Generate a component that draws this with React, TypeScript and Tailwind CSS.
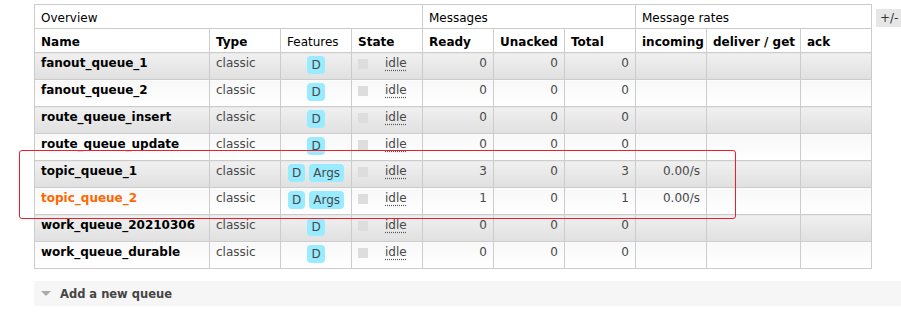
import React from "react";

type Queue = {
  name: string;
  args?: boolean;
  ready: number;
  unacked: number;
  total: number;
  incoming?: string;
  hot?: boolean;
};

const queues: Queue[] = [
  { name: "fanout_queue_1", ready: 0, unacked: 0, total: 0 },
  { name: "fanout_queue_2", ready: 0, unacked: 0, total: 0 },
  { name: "route_queue_insert", ready: 0, unacked: 0, total: 0 },
  { name: "route_queue_update", ready: 0, unacked: 0, total: 0 },
  { name: "topic_queue_1", args: true, ready: 3, unacked: 0, total: 3, incoming: "0.00/s" },
  { name: "topic_queue_2", args: true, ready: 1, unacked: 0, total: 1, incoming: "0.00/s", hot: true },
  { name: "work_queue_20210306", ready: 0, unacked: 0, total: 0 },
  { name: "work_queue_durable", ready: 0, unacked: 0, total: 0 },
];

const widths = [175, 71, 71, 71, 71, 71, 71, 71, 94, 71];

function Tag({ children }: { children: React.ReactNode }) {
  return (
    <span className="inline-block h-[18px] min-w-[17px] rounded-[4px] bg-[#99ebff] px-[4px] text-center text-[12px] leading-[19px] text-[#484848]">
      {children}
    </span>
  );
}

export default function App() {
  const th =
    "border border-[#cccccc] px-[6px] pt-[6px] pb-0 text-left align-top text-[12px] leading-[14px] text-black h-[24px] whitespace-nowrap overflow-hidden";
  const td =
    "border border-[#cccccc] px-[6px] pt-[3px] pb-0 align-top text-[12px] leading-[14px] h-[27px] text-[#484848] whitespace-nowrap";

  return (
    <div
      className="relative h-[312px] w-[901px] overflow-hidden bg-white pt-[4px] pl-[34px]"
      style={{ fontFamily: '"DejaVu Sans", Verdana, sans-serif' }}
    >
      <div className="flex items-start">
        <table className="w-[838px] shrink-0 table-fixed border-collapse">
          <colgroup>
            {widths.map((w, i) => (
              <col key={i} style={{ width: w }} />
            ))}
          </colgroup>
          <thead>
            <tr>
              <th colSpan={4} className={`${th} font-normal`}>Overview</th>
              <th colSpan={3} className={`${th} font-normal`}>Messages</th>
              <th colSpan={3} className={`${th} font-normal`}>Message rates</th>
            </tr>
            <tr>
              <th className={`${th} font-bold`}>Name</th>
              <th className={`${th} font-bold`}>Type</th>
              <th className={`${th} font-normal`}>Features</th>
              <th className={`${th} font-bold`}>State</th>
              <th className={`${th} font-bold`}>Ready</th>
              <th className={`${th} font-bold`}>Unacked</th>
              <th className={`${th} font-bold`}>Total</th>
              <th className={`${th} font-bold`}>incoming</th>
              <th className={`${th} font-bold`}>deliver / get</th>
              <th className={`${th} font-bold`}>ack</th>
            </tr>
          </thead>
          <tbody>
            {queues.map((q, i) => {
              const bg =
                i % 2 === 0
                  ? "bg-linear-to-b from-[#f0f0f0] to-[#e0e0e0]"
                  : "bg-linear-to-b from-[#f8f8f8] to-[#ffffff]";
              return (
                <tr key={q.name}>
                  <td className={`${td} ${bg} font-bold ${q.hot ? "text-[#ff6600]" : "text-black"}`}>
                    {q.name}
                  </td>
                  <td className={`${td} ${bg}`}>classic</td>
                  <td className={`${td} ${bg}`}>
                    <div className="flex justify-center gap-[4px]">
                      <Tag>D</Tag>
                      {q.args && <Tag>Args</Tag>}
                    </div>
                  </td>
                  <td className={`${td} ${bg}`}>
                    <div className="flex items-start">
                      <span className="mt-[3px] h-[10px] w-[10px] bg-[#dddddd]" />
                      <span className="ml-[17px] underline decoration-dotted decoration-[#555] underline-offset-[3px]">
                        idle
                      </span>
                    </div>
                  </td>
                  <td className={`${td} ${bg} text-right`}>{q.ready}</td>
                  <td className={`${td} ${bg} text-right`}>{q.unacked}</td>
                  <td className={`${td} ${bg} text-right`}>{q.total}</td>
                  <td className={`${td} ${bg} text-right`}>{q.incoming ?? ""}</td>
                  <td className={`${td} ${bg}`}></td>
                  <td className={`${td} ${bg}`}></td>
                </tr>
              );
            })}
          </tbody>
        </table>
        <span className="mt-[5px] ml-[4px] shrink-0 bg-[#e6e6e6] px-[4px] pr-[10px] text-[12px] leading-[18px] text-[#333]">
          +/-
        </span>
      </div>

      <div className="mt-[12px] flex h-[25px] items-center bg-[#f6f6f6] pl-[7px]">
        <svg width="10" height="6" viewBox="0 0 10 6" className="shrink-0">
          <polygon points="0,0 10,0 5,5" fill="#aaaaaa" />
        </svg>
        <span className="ml-[9px] text-[11.5px] font-bold leading-[14px] text-[#444]">Add a new queue</span>
      </div>

      {/* annotation box */}
      <div className="absolute top-[150px] left-[19px] h-[69px] w-[717px] rounded-[3px] border border-[#e8202a]" />
    </div>
  );
}
